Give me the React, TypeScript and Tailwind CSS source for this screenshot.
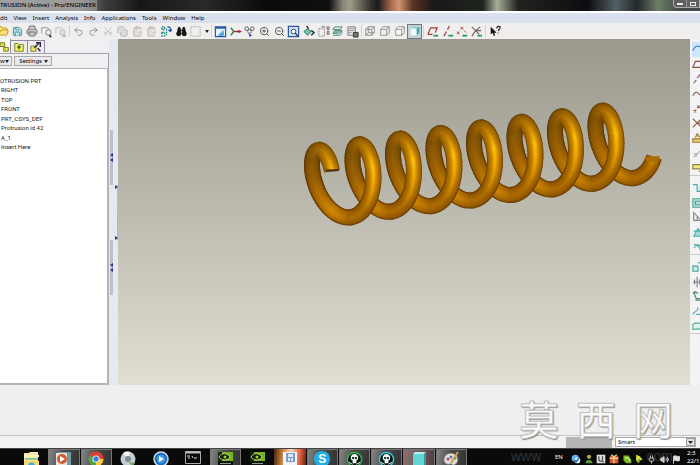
import React from "react";
import { Undo2, Redo2, Scissors, ZoomIn, ZoomOut, Printer, Binoculars, Save, FolderOpen, Copy, ClipboardPaste, Volume2, Flag, Plug } from "lucide-react";

const UI = "font-['Noto_Sans','Open_Sans',sans-serif]";

function Icon({ children, size = 13 }: { children: React.ReactNode; size?: number }) {
  return (
    <svg width={size} height={size} viewBox="0 0 14 14" fill="none" strokeWidth="1" className="shrink-0" aria-hidden="true">
      {children}
    </svg>
  );
}

function Tool({ label, active, children }: { label: string; active?: boolean; children: React.ReactNode }) {
  return (
    <button
      type="button"
      aria-label={label}
      className={`flex h-[15px] min-w-0 flex-1 basis-0 items-center justify-center ${active ? "bg-[#c3d3d8] ring-1 ring-inset ring-[#70757c]" : ""}`}
    >
      {children}
    </button>
  );
}

const Sep = () => <span className="mx-px h-3 w-px shrink-0 bg-[#d2d2d2]" />;

const Cube = ({ fill = "none", stroke = "#858688", inner }: { fill?: string; stroke?: string; inner?: boolean }) => (
  <Icon size={12}>
    <path d="M2 5h7v7H2zM2 5l3-3h7v7l-3 3M9 5l3-3" fill={fill} stroke={stroke} />
    {inner && <path d="M5 2v7h7M5 9l-3 3" stroke={stroke} />}
  </Icon>
);

const Eye = () => <path d="M8 10.500h5v2H8z" fill="#2a9d6c" />;

function Toolbar() {
  return (
    <div role="toolbar" aria-label="Main" className="flex h-4 shrink-0 items-center overflow-hidden bg-[#f1efee]">
      <div className="-ml-1 flex w-[72px] shrink-0">
        <Tool label="Open"><FolderOpen size={12} color="#c59a1c" fill="#ffe27a" strokeWidth={2} /></Tool>
        <Tool label="Save"><Save size={11} color="#3c8d9b" fill="#bfe6e6" strokeWidth={2} /></Tool>
        <Tool label="Print"><Printer size={12} color="#77747a" fill="#c9c6c6" strokeWidth={2} /></Tool>
        <Tool label="Send">
          <Icon><path d="M2 9V3h6l2 2" stroke="#858585" fill="#fff" /><circle cx="9" cy="8" r="3" stroke="#777" fill="#eee" /><path d="M10 11l2 2" stroke="#333" strokeWidth="2" /></Icon>
        </Tool>
        <Tool label="Send link">
          <Icon><path d="M2 9V3h6l2 2" stroke="#bbb" fill="#eee" /><circle cx="9" cy="8" r="3" stroke="#bbb" fill="#ddd" /><path d="M9 12h4" stroke="#bbb" strokeWidth="2" /></Icon>
        </Tool>
      </div>
      <Sep />
      <div className="flex w-[132px] shrink-0">
        <Tool label="Undo"><Undo2 size={11} color="#8b8b8f" /></Tool>
        <Tool label="Redo"><Redo2 size={11} color="#8b8b8f" /></Tool>
        <Tool label="Cut"><Scissors size={10} color="#bdbdbd" className="-rotate-90" /></Tool>
        <Tool label="Copy"><Copy size={11} color="#b4b4b4" fill="#dedede" /></Tool>
        <Tool label="Paste"><ClipboardPaste size={11} color="#b9b3b0" fill="#e2dfdd" /></Tool>
        <Tool label="Paste special"><ClipboardPaste size={11} color="#b9b3b0" fill="#e2dfdd" /></Tool>
        <Tool label="Regenerate">
          <Icon><path d="M2 2h3v3H2zM2 8h3v4H2zM7 4v7" stroke="#1d8d84" strokeDasharray="2 1" strokeWidth="1.500" /><path d="M8 2c3 0 4 1 3 5M9 5l2 2 2-2" stroke="#1e4aa5" strokeWidth="1.300" /></Icon>
        </Tool>
        <Tool label="Find"><Binoculars size={11} color="#151515" fill="#151515" /></Tool>
        <Tool label="Select items">
          <Icon><path d="M2 2h10v10H2z" stroke="#aaa" strokeDasharray="2 1" /></Icon>
        </Tool>
      </div>
      <button type="button" aria-label="Selection options" className="flex h-3 w-[7px] shrink-0 items-center justify-center">
        <svg width="4" height="3" viewBox="0 0 4 3"><path d="M0 0h4L2 3z" fill="#222" /></svg>
      </button>
      <Sep />
      <div className="flex w-[147px] shrink-0">
        <Tool label="Repaint">
          <Icon><path d="M1.500 2h11v10.500h-11z" fill="#e3f1fb" stroke="#245da5" strokeWidth="1.300" /><path d="M1 3h12" stroke="#245da5" strokeWidth="2" /><path d="M5 11l5-5M5 11h5V7" stroke="#3b8cc8" fill="#7ab7df" /></Icon>
        </Tool>
        <Tool label="Spin center">
          <Icon><path d="M5 7L2 3M5 7l-3 4" stroke="#2b8550" strokeWidth="1.500" /><path d="M5 7h6" stroke="#8b2f38" strokeWidth="1.500" /><path d="M10 5l4 2-4 2z" fill="#b02234" /></Icon>
        </Tool>
        <Tool label="Orient mode">
          <Icon><circle cx="4" cy="4" r="2" stroke="#555" /><circle cx="10" cy="4" r="2" stroke="#555" /><circle cx="7" cy="7" r="2" stroke="#667" /><path d="M6 9l4 2-3 2z" fill="#3a4fc2" /></Icon>
        </Tool>
        <Tool label="Zoom in"><ZoomIn size={11} color="#4e4e52" strokeWidth={2} /></Tool>
        <Tool label="Zoom out"><ZoomOut size={11} color="#4e4e52" strokeWidth={2} /></Tool>
        <Tool label="Refit">
          <Icon><path d="M1.500 1.500h11v11h-11z" fill="#cfe2f5" stroke="#2b57a5" strokeWidth="1.300" /><circle cx="7" cy="7" r="2.500" fill="#fff" stroke="#345" /><path d="M9 9l3 3" stroke="#345" strokeWidth="1.500" /></Icon>
        </Tool>
        <Tool label="Reorient">
          <Icon><path d="M2 7l4-3 4 3-4 4z" fill="#74c4b1" stroke="#276f60" /><path d="M5 1l2 3M10 6l3 2-3 3" stroke="#17352f" strokeWidth="1.500" /></Icon>
        </Tool>
        <Tool label="Saved views">
          <Icon><path d="M2 4h6v8H2z" stroke="#888" strokeDasharray="2 1" /><path d="M5 2h4M11 2h2v3h-2zM11 7h2v3h-2z" stroke="#665d59" /></Icon>
        </Tool>
        <Tool label="Layers">
          <Icon><path d="M2 9h8l2-3H4z" fill="#8bb9ae" stroke="#4d857c" /><path d="M2 5h8l2-3H4zM2 11h8l2-3" fill="#d5ede7" stroke="#4d857c" /></Icon>
        </Tool>
        <Tool label="View manager">
          <Icon><path d="M2 2h8v9H2z" fill="#e5e5e5" stroke="#777" /><path d="M3 4h6M3 6h6M3 8h3" stroke="#999" /><path d="M8 8h5v5H8z" fill="#777" stroke="#333" /></Icon>
        </Tool>
      </div>
      <Sep />
      <div className="flex w-[59px] shrink-0">
        <Tool label="Wireframe"><Cube inner /></Tool>
        <Tool label="Hidden line"><Cube /></Tool>
        <Tool label="No hidden"><Cube fill="#f7f7f7" /></Tool>
        <Tool label="Shading" active>
          <Icon size={12}><path d="M2 4h7v8H2z" fill="#f3fbfb" /><path d="M2 4l3-2h7L9 4z" fill="#8ad5cf" /><path d="M9 4l3-2v7l-3 3z" fill="#3aa9a5" /></Icon>
        </Tool>
      </div>
      <Sep />
      <div className="flex w-[59px] shrink-0">
        <Tool label="Datum planes"><Icon><path d="M2 10l3-7h7l-2 5M2 10h5" stroke="#9c4038" strokeWidth="1.300" /><Eye /></Icon></Tool>
        <Tool label="Datum axes"><Icon><path d="M3 12l3-5M7 5l2-4" stroke="#9c4038" strokeWidth="1.300" /><Eye /></Icon></Tool>
        <Tool label="Datum points"><Icon><path d="M2 7l3 3M5 7l-3 3M6 2l3 3M9 2L6 5M10 6l2 2" stroke="#9c4038" /><Eye /></Icon></Tool>
        <Tool label="Coordinate systems"><Icon><path d="M2 2l8 8M11 2L6 6l-4 6M6 6h6" stroke="#766058" strokeWidth="1.200" /><Eye /></Icon></Tool>
      </div>
      <Sep />
      <div className="flex w-[15px] shrink-0">
        <Tool label="Context help">
          <Icon size={12}><path d="M2 2v9l2-2 2 4 1-1-1-3h3z" fill="#111" /><path d="M9 4c0-3 4-3 4-1 0 2-2 2-2 4M11 9v1" stroke="#2a2230" strokeWidth="1.400" /></Icon>
        </Tool>
      </div>
    </div>
  );
}

/* ---- Helical spring ---- */
const TURN = Math.PI * 2;
function helix(t: number): [number, number] {
  const a = t * TURN;
  return [324 + 40.5 * t - 19 * Math.sin(a) - 4.6 * Math.cos(a), 185 - 5.6 * t - 35.2 * Math.cos(a)];
}
const STOPS: [number, number[], number[], number[]][] = [
  // phase, rim, body, highlight
  [0, [104, 64, 4], [150, 96, 4], [168, 110, 4]],
  [0.13, [92, 56, 4], [122, 78, 4], [134, 86, 6]],
  [0.25, [92, 52, 4], [146, 91, 4], [160, 101, 4]],
  [0.4, [100, 57, 4], [192, 122, 2], [212, 138, 2]],
  [0.5, [108, 63, 4], [154, 95, 4], [172, 108, 4]],
  [0.6, [106, 60, 2], [150, 91, 2], [172, 108, 2]],
  [0.74, [118, 72, 2], [174, 112, 2], [240, 166, 4]],
  [0.82, [122, 76, 2], [184, 120, 2], [255, 190, 8]],
  [0.92, [114, 71, 4], [164, 106, 4], [196, 132, 4]],
  [1, [104, 64, 4], [150, 96, 4], [168, 110, 4]],
];
function tone(t: number, mix: number) {
  const u = ((t % 1) + 1) % 1;
  let i = 0;
  while (i < STOPS.length - 2 && STOPS[i + 1][0] < u) i++;
  const f = (u - STOPS[i][0]) / (STOPS[i + 1][0] - STOPS[i][0]);
  const at = (k: number, c: number) => (STOPS[i][k] as number[])[c] * (1 - f) + (STOPS[i + 1][k] as number[])[c] * f;
  const rgb = [0, 1, 2].map((c) =>
    Math.round(mix < 0.5 ? at(1, c) + (at(2, c) - at(1, c)) * mix * 2 : at(2, c) + (at(3, c) - at(2, c)) * (mix - 0.5) * 2),
  );
  return `rgb(${rgb.join(",")})`;
}
const LAYERS = [
  [16, 0], [14, 0.3], [12, 0.44], [10, 0.52], [8, 0.62], [6, 0.74], [4, 0.88], [2, 1],
];
function Strand({ from, to }: { from: number; to: number }) {
  const n = Math.max(4, Math.round((to - from) * 64));
  return (
    <>
      {LAYERS.map(([w, mix]) =>
        Array.from({ length: n }, (_, i) => {
          const a = from + ((to - from) * i) / n;
          const b = Math.min(to, from + ((to - from) * (i + 1.6)) / n);
          const p = [a, (a + b) / 2, b].map((t) => helix(t).map((v) => v.toFixed(2)).join(",")).join(" ");
          return <polyline key={`${w}-${i}`} points={p} fill="none" stroke={tone((a + b) / 2, mix)} strokeWidth={w} />;
        }),
      )}
    </>
  );
}
function Spring() {
  const coils = [0, 1, 2, 3, 4, 5, 6, 7];
  return (
    <svg viewBox="118 39 572 346" className="block h-full w-full" role="img" aria-label="Helical spring">
      {coils.map((c) => <Strand key={`b${c}`} from={c - 0.01} to={c + 0.52} />)}
      <Strand from={-0.18} to={0.01} />
      {coils.map((c) => <Strand key={`f${c}`} from={c + 0.5} to={c === 7 ? 7.68 : c + 1.01} />)}
      <path d="M325.500 169.500l13.500-.5v2l-12.500 1z" fill="#50330a" />
      <path d="M644 159l2-2 14-1-3 7z" fill="#a96c06" />
    </svg>
  );
}

const TREE = ["RIGHT", "TOP", "FRONT", "PRT_CSYS_DEF", "Protrusion id 42", "A_1", "Insert Here"];

function ModelTree() {
  return (
    <aside className="flex w-[109px] shrink-0 flex-col bg-[#f0eff1]">
      <div className="flex h-[14px] shrink-0 items-end" role="tablist">
        <button type="button" role="tab" aria-label="Model tree" className="flex h-[14px] w-[11px] items-center border-r border-[#8b8b9c] bg-[#f7f7f4]">
          <Icon><path d="M0 3h5v4H0zM4 8h5v4H4z" fill="#e7e04a" stroke="#77751f" /></Icon>
        </button>
        <button type="button" role="tab" aria-label="Folder browser" className="flex h-[13px] w-[17px] items-center justify-center border-r border-t border-[#8b8b9c] bg-[#ededea]">
          <Icon size={12}><path d="M2 3h4l1 1h5v8H2z" fill="#f1ef62" stroke="#77752a" /><path d="M7 5v5M5 7h4" stroke="#345d2e" strokeWidth="1.500" /></Icon>
        </button>
        <button type="button" role="tab" aria-label="Favorites" className="flex h-[13px] w-[17px] items-center justify-center border-r border-t border-[#8b8b9c] bg-[#ededf2]">
          <Icon size={12}><path d="M1 6h6v6H1z" fill="#ede46b" stroke="#77752a" /><path d="M5 8l5-5M7 2h5v5M9 8l3 4" stroke="#33283a" strokeWidth="1.700" /></Icon>
        </button>
      </div>
      <div className="flex h-[15px] shrink-0 items-center gap-[2px] border-r border-t border-[#a4a4ab]">
        <button type="button" className="flex h-[10px] w-3 items-center justify-between border border-l-0 border-[#aaa] bg-[#e9e8ea] pr-[2px] text-[6px] leading-none">
          w <svg width="4" height="3" viewBox="0 0 4 3" className="shrink-0"><path d="M0 0h4L2 3z" fill="#222" /></svg>
        </button>
        <button type="button" className="flex h-[10px] w-[38px] items-center justify-end gap-[2px] border border-[#aaa] bg-[#e9e8ea] pr-[3px] text-[6px] leading-none">
          Settings <svg width="4" height="3" viewBox="0 0 4 3"><path d="M0 0h4L2 3z" fill="#222" /></svg>
        </button>
      </div>
      <div className="flex-1 border-b-2 border-r-2 border-t border-[#b4b4b8] bg-white pt-[7px] font-['Roboto','Liberation_Sans',sans-serif] text-[6px] text-[#222]">
        <p className="h-[9px] leading-[9px]">OTRUSION.PRT</p>
        <ul className="flex h-[66px] flex-col justify-between pl-px">
          {TREE.map((t) => <li key={t} className="leading-[9px]">{t}</li>)}
        </ul>
      </div>
    </aside>
  );
}

const Arrow = ({ right }: { right?: boolean }) => (
  <svg width="3" height="4" viewBox="0 0 3 4" className="block shrink-0">
    <path d={right ? "M0 0v4l3-2z" : "M3 0v4L0 2z"} fill="#2b3587" />
  </svg>
);

function Sash({ className }: { className: string }) {
  return (
    <div className={`flex w-[3px] flex-col items-center justify-center gap-px bg-[#bcc2cc] ${className}`}>
      <Arrow /><Arrow />
    </div>
  );
}

function Splitter() {
  return (
    <div className="flex w-[9px] shrink-0 justify-end bg-[#e3eaf1]">
      <div className="flex w-[5px] flex-col items-start">
        <Sash className="mt-[91px] h-[55px]" />
        <Sash className="mt-[55px] h-[55px]" />
      </div>
      <div className="mt-[146px] flex h-[55px] w-[3px] flex-col justify-between border-r border-[#b1bac6]">
        <Arrow right /><Arrow right />
      </div>
    </div>
  );
}

type Glyph = { n: string; d: string; c: string; f?: string };
const FEATURES: Glyph[][] = [
  [
    { n: "Style", d: "M1 9C4 2 8 2 12 7", c: "#2f7fc8" },
    { n: "Plane", d: "M1 11L4 4h9l-3 7z", c: "#8d5248" },
    { n: "Axis", d: "M2 12l3-4M6 6l4-5", c: "#8b5a50" },
    { n: "Curve", d: "M1 9c3-6 5-5 7-2s4 0 5-2", c: "#8a5550" },
    { n: "Points", d: "M2 8l3 3M5 8l-3 3M6 3l3 3M9 3L6 6M10 8l3 3", c: "#9a5638" },
    { n: "Csys", d: "M1 2l10 10M11 2L1 12M6 7h7", c: "#8d5a45" },
    { n: "Analysis", d: "M1 8h12v4H1zM4 6l2-4 3 4", c: "#9b7132", f: "#e9d36e" },
    { n: "Reference", d: "M2 12l4-4M6 8l5-5M2 8h3v3", c: "#aaa" },
    { n: "Annotation", d: "M1 3h11v5H1zM8 11l3-1", c: "#8c8140", f: "#f1ec7c" },
  ],
  [
    { n: "Hole", d: "M1 3h5v8h5V5h3", c: "#46acac", f: "#d4f0ee" },
    { n: "Shell", d: "M1 2h12v10H1zM4 5h8v4H4z", c: "#52a098", f: "#b8e2d7" },
    { n: "Rib", d: "M2 2v9h9zM6 11V7", c: "#85848f" },
    { n: "Draft", d: "M2 12l5-9 6 9zM2 6h6", c: "#45b0a8", f: "#9de0da" },
    { n: "Round", d: "M2 4c5 0 7 3 8 8M2 8l5-4 5 4", c: "#54b0a0" },
  ],
  [
    { n: "Extrude", d: "M1 6h6v6H1zM7 2h5v4", c: "#3fa29a", f: "#c9ebe8" },
    { n: "Revolve", d: "M6 1v12M1 7h12M3 4v6M9 4v6", c: "#7d7d8a" },
    { n: "Sweep", d: "M2 2l3 8h8v2H4M1 4l3-2 3 2", c: "#4b8a6c", f: "#bfe4d4" },
    { n: "Blend", d: "M1 11c2-5 6-2 6-8M5 11h8L9 4", c: "#49adaf" },
    { n: "Surface", d: "M1 11V5c3-3 8 0 12-2v7z", c: "#56ad98", f: "#e1f4ef" },
  ],
];

function FeatureBar() {
  const heights = ["h-[134px]", "h-[74px]", "h-[74px]"];
  return (
    <div role="toolbar" aria-label="Features" className="flex w-[10px] shrink-0 flex-col gap-[5px] overflow-hidden bg-[#f3f3f5] pt-[3px]">
      {FEATURES.map((g, i) => (
        <div key={i} className={`flex w-4 flex-col border-b border-[#ccc] pl-[2px] ${heights[i]}`}>
          {g.map((f) => (
            <button key={f.n} type="button" aria-label={f.n} className={`flex w-4 flex-1 items-center overflow-hidden ${f.n === "Style" ? "bg-[#cfe5fa]" : ""}`}>
              <Icon size={12}><path d={f.d} stroke={f.c} fill={f.f ?? "none"} strokeWidth="1.300" /></Icon>
            </button>
          ))}
        </div>
      ))}
    </div>
  );
}

const Skull = ({ c }: { c: string }) => (
  <svg width="17" height="17" viewBox="0 0 18 18">
    <circle cx="9" cy="9" r="7.500" fill="#07150f" stroke={c} strokeWidth="1.500" />
    <path d="M5 7c0-5 8-5 8 0 0 2-1 3-2 3v3H7v-3C6 10 5 9 5 7z" fill="#eff8f6" />
    <circle cx="7.500" cy="7.500" r="1.200" fill="#111" /><circle cx="10.500" cy="7.500" r="1.200" fill="#111" />
    <path d="M3 12l4 2M15 12l-4 2" stroke="#eff8f6" />
  </svg>
);
const Nvidia = () => (
  <svg width="15" height="15" viewBox="0 0 15 15">
    <path d="M0 1h15v9H0z" fill="#1a2a08" /><path d="M4 1h11v9H4z" fill="#77b51b" />
    <path d="M1 6c3-5 8-4 11 0-3 4-8 4-11 0z" fill="#13200a" stroke="#cfe8a1" strokeWidth="0.800" /><circle cx="7" cy="6" r="1.500" fill="#9bd33c" />
    <path d="M0 10h15v5H0z" fill="#111" /><path d="M2 12.500h11" stroke="#8b9a77" />
  </svg>
);

const TILE = "bg-[linear-gradient(100deg,#8a8a8a,#4a4a4a_45%,#303030)] ring-1 ring-inset ring-[#777]";
const WARM = "bg-[linear-gradient(100deg,#8a7070,#705c5e_50%,#49393c)] ring-1 ring-inset ring-[#777]";
const APPS: { n: string; tile: string; icon: React.ReactNode }[] = [
  { n: "Explorer", tile: "", icon: <svg width="17" height="15" viewBox="0 0 17 15"><path d="M1 2h5l1-1h8v14H1z" fill="#f4e9a4" /><path d="M1 4h15v2H1z" fill="#fff6c9" /><path d="M2 7h13v2H2z" fill="#98c48f" /><path d="M1 10h15v5H1z" fill="#efd96e" /><path d="M5 15c0-5 7-5 7 0" fill="#4fa3df" /></svg> },
  { n: "Media Player", tile: TILE, icon: <svg width="15" height="15" viewBox="0 0 15 15"><path d="M2 1h13v13H2z" fill="#6f9aa9" /><path d="M0 2h11v12H0z" fill="#e8e4dc" /><circle cx="6" cy="8" r="5" fill="#d4592d" /><path d="M4 5l5 3-5 3z" fill="#fff" /></svg> },
  { n: "Chrome", tile: TILE, icon: <svg width="16" height="16" viewBox="0 0 16 16"><circle cx="8" cy="8" r="7.500" fill="#e0402f" /><path d="M8 8L1.500 4.500A7.500 7.500 0 0 0 8 15.500z" fill="#45a849" /><path d="M8 8h7.500A7.500 7.500 0 0 1 8 15.500z" fill="#f6cc37" /><circle cx="8" cy="8" r="3.500" fill="#fff" /><circle cx="8" cy="8" r="2.700" fill="#3f7fdc" /></svg> },
  { n: "Disc tool", tile: "", icon: <svg width="16" height="16" viewBox="0 0 16 16"><circle cx="8" cy="8" r="7.500" fill="#c4ced3" /><path d="M8 8L3 2a8 8 0 0 1 7-1z" fill="#f4f8fa" /><circle cx="8" cy="8" r="3" fill="#7e8990" /><path d="M9 11l6 1-3 4z" fill="#73a964" /></svg> },
  { n: "Player", tile: "", icon: <svg width="16" height="16" viewBox="0 0 16 16"><circle cx="8" cy="8" r="7" fill="#1d68b7" stroke="#c8dded" strokeWidth="1.500" /><circle cx="8" cy="8" r="4.500" fill="#3895df" /><path d="M6 5l5 3-5 3z" fill="#fff" /></svg> },
  { n: "Console", tile: "", icon: <svg width="16" height="13" viewBox="0 0 16 13"><path d="M.5.5h15v12H.5z" fill="#080808" stroke="#aaa" /><path d="M1 1.500h14" stroke="#bbb" strokeWidth="2" /><path d="M2 5h3M3 7h2M7 5l1 2M9 7h3" stroke="#ddd" /></svg> },
  { n: "Nvidia", tile: TILE, icon: <Nvidia /> },
  { n: "Nvidia panel", tile: "", icon: <Nvidia /> },
  { n: "Pro/ENGINEER", tile: "bg-[linear-gradient(95deg,#4b2410,#d98f44_30%,#f4d9b8_50%,#d95a3a_80%,#5b1d15)]", icon: <svg width="16" height="15" viewBox="0 0 16 15"><path d="M1 1h14v14H1z" fill="#f2f4fa" /><path d="M4 2h9v9H4z" fill="#7d9ccb" /><path d="M6 3h5v3H6zM6 7h2v3H6zM9 7h2v3H9z" fill="#dfeaf7" /></svg> },
  { n: "Skype", tile: TILE, icon: <span className="flex h-4 w-4 items-center justify-center rounded-lg bg-[#22aee8] font-['Liberation_Sans',sans-serif] text-[12px] font-bold leading-none text-white">S</span> },
  { n: "Green skull", tile: TILE, icon: <Skull c="#2fb64c" /> },
  { n: "Blue skull", tile: TILE, icon: <Skull c="#3fc2dc" /> },
  { n: "Modeler", tile: WARM, icon: <svg width="14" height="14" viewBox="0 0 14 14"><path d="M1 3l2-2h11l-2 2z" fill="#b6f1ef" /><path d="M1 3h11v11H1z" fill="#63d5d6" /><path d="M12 3l2-2v13h-2z" fill="#2d9a9f" /></svg> },
  { n: "Paint", tile: TILE, icon: <svg width="17" height="16" viewBox="0 0 17 16"><path d="M1 9C1 4 6 1 11 3c5 2 5 9 0 11-2 1-2-2-4-1-3 1-6-1-6-4z" fill="#dfe1d8" stroke="#888" strokeWidth="0.800" /><circle cx="5" cy="8" r="1.500" fill="#cc3e3e" /><circle cx="8" cy="6" r="1.500" fill="#3e7ecc" /><circle cx="12" cy="7" r="1.500" fill="#3b9a55" /><path d="M8 12l7-11" stroke="#d3a047" strokeWidth="2" /></svg> },
];

const TRAY: { n: string; icon: React.ReactNode }[] = [
  { n: "Messenger", icon: <Icon size={10}><circle cx="6" cy="6" r="5" fill="#69b6e6" /><circle cx="9" cy="9" r="4" fill="#dcf0fb" /><path d="M4 8l3 3 4-5" stroke="#1e6eb8" strokeWidth="2" /></Icon> },
  { n: "Monitor", icon: <Icon size={10}><circle cx="7" cy="4" r="3" fill="#a3b14c" /><path d="M2 13c0-6 10-6 10 0z" fill="#5c9a36" /></Icon> },
  { n: "Updater", icon: <Icon size={10}><path d="M1 1h12v12H1z" fill="#ddd" /><path d="M4 3v5c0 3 5 3 5 0V3M9 11h2" stroke="#333" strokeWidth="1.500" /></Icon> },
  { n: "Gift", icon: <Icon size={10}><path d="M1 3h12v10H1z" fill="#d5562f" /><path d="M1 6h12M7 3v10M3 1l4 3 4-3" stroke="#f3cf8a" strokeWidth="2" /></Icon> },
  { n: "Graphics", icon: <Icon size={10}><path d="M2 2h7l4 6v5H6L2 9z" fill="#79b928" /><path d="M4 6l4-1 3 5" stroke="#d9f09c" strokeWidth="1.500" /></Icon> },
  { n: "Antivirus", icon: <Icon size={10}><path d="M3 1l5 2 4 5-4 1-1 4-4-4z" fill="#dde13a" /><path d="M5 12l3-5" stroke="#5f9b20" strokeWidth="2" /></Icon> },
  { n: "Power", icon: <Plug size={9} color="#e8e8e8" /> },
  { n: "Volume", icon: <Volume2 size={9} color="#eee" fill="#ddd" /> },
  { n: "Action center", icon: <Flag size={9} color="#f2f2f2" fill="#ddd" /> },
];

const MENUS = ["dit", "View", "Insert", "Analysis", "Info", "Applications", "Tools", "Window", "Help"];

export default function App() {
  return (
    <div className={`relative flex h-screen flex-col overflow-hidden bg-[#f0f0f0] text-black ${UI}`}>
      <header className="flex h-[11px] shrink-0 items-center justify-between bg-[linear-gradient(90deg,#9a9a9a_0%,#8e8e8e_11%,#3c3c3c_15%,#171717_20%,#292929_29%,#0b0b0b_38%,#101010_47%,#8c8679_49%,#a09c8a_50%,#34302a_53%,#1a1a1e_54%,#b07050_56%,#d09470_57%,#593220_59%,#181818_62%,#20241e_69%,#a7ad99_71%,#20231f_74%,#0d0d10_84%,#536063_88%,#23272a_91%,#6c7f67_94%,#474a4a_97%)]">
        <h1 className="w-[97px] overflow-hidden whitespace-nowrap bg-[#a4a4a4]/60 text-[6px] font-medium leading-[11px]">TRUSION (Active) - Pro/ENGINEER</h1>
        <div className="mb-[3px] flex h-2 w-[27px] items-center rounded-bl border border-t-0 border-[#aaa] bg-[#606060]">
          <button type="button" aria-label="Minimize" className="flex h-full flex-1 items-center justify-center border-r border-[#999]"><span className="h-[2px] w-[6px] bg-[#eee]" /></button>
          <button type="button" aria-label="Restore" className="flex h-full flex-1 items-center justify-center"><span className="h-1 w-[6px] border border-[#eee]" /></button>
        </div>
      </header>
      <nav className="flex h-3 shrink-0 items-center gap-[6px] border-t-2 border-white bg-[#dbe0ef] text-[6px] leading-none">
        {MENUS.map((m) => <button key={m} type="button" className="shrink-0">{m}</button>)}
      </nav>
      <Toolbar />
      <main className="flex min-h-0 flex-1">
        <ModelTree />
        <Splitter />
        <section aria-label="Graphics area" className="min-w-0 flex-1 bg-linear-to-b from-[#9b998e] to-[#e1dfd2]">
          <Spring />
        </section>
        <FeatureBar />
      </main>
      <div className="h-[51px] shrink-0 border-b border-[#c5c5c5] bg-[#efefef]" />
      <div className="flex h-[12px] shrink-0 items-center justify-end gap-[3px] bg-[#f2f2f2] pr-1">
        <div className="h-[11px] w-[46px] bg-[#b5b5b5]" />
        <div className="relative h-[10px] w-[81px]">
          <select aria-label="Selection filter" className="block h-full w-full appearance-none border border-[#aaa] bg-white pl-[2px] text-[6px] leading-none">
            <option>Smart</option>
          </select>
          <span className="pointer-events-none absolute inset-y-px right-px flex w-[9px] items-center justify-center border border-[#999] bg-[#e4e4e4]">
            <svg width="5" height="3" viewBox="0 0 5 3"><path d="M0 0h5L2.500 3z" fill="#222" /></svg>
          </span>
        </div>
      </div>
      <footer className="flex h-[17px] shrink-0 items-start justify-between overflow-hidden border-t border-[#444] bg-[#0a0a0a] text-white">
        <div className="ml-4 flex w-[452px] shrink-0">
          {APPS.map((a) => (
            <button key={a.n} type="button" aria-label={a.n} className={`mr-px flex h-[22px] min-w-0 flex-1 basis-0 items-start justify-center pt-[2px] ${a.tile}`}>
              {a.icon}
            </button>
          ))}
        </div>
        <div className="flex items-start">
          <span className="w-[15px] text-[6px] leading-[17px]">EN</span>
          <div className="flex w-[113px]">
            {TRAY.map((t) => <button key={t.n} type="button" aria-label={t.n} className="flex h-[20px] flex-1 items-center justify-center">{t.icon}</button>)}
          </div>
          <div className="w-[17px] whitespace-nowrap pl-1 text-[6px] leading-[8px]"><p>2:3</p><p>22/1</p></div>
        </div>
      </footer>
      <div className="pointer-events-none absolute bottom-[2px] right-[27px] flex flex-col gap-[9px]">
        <p className="flex gap-[17px] font-['Noto_Sans_CJK_SC',sans-serif] text-[40px] font-medium leading-[44px] text-[#fafafa] [-webkit-text-stroke:1px_#c0c0c0] [text-shadow:1px_1px_1px_#777]">
          <span>莫</span><span>西</span><span>网</span>
        </p>
        <p className="-ml-2 flex justify-between font-['Liberation_Sans',sans-serif] text-[14px] leading-[14px] text-[#777]/40">
          <span>www</span><span>com</span>
        </p>
      </div>
    </div>
  );
}
